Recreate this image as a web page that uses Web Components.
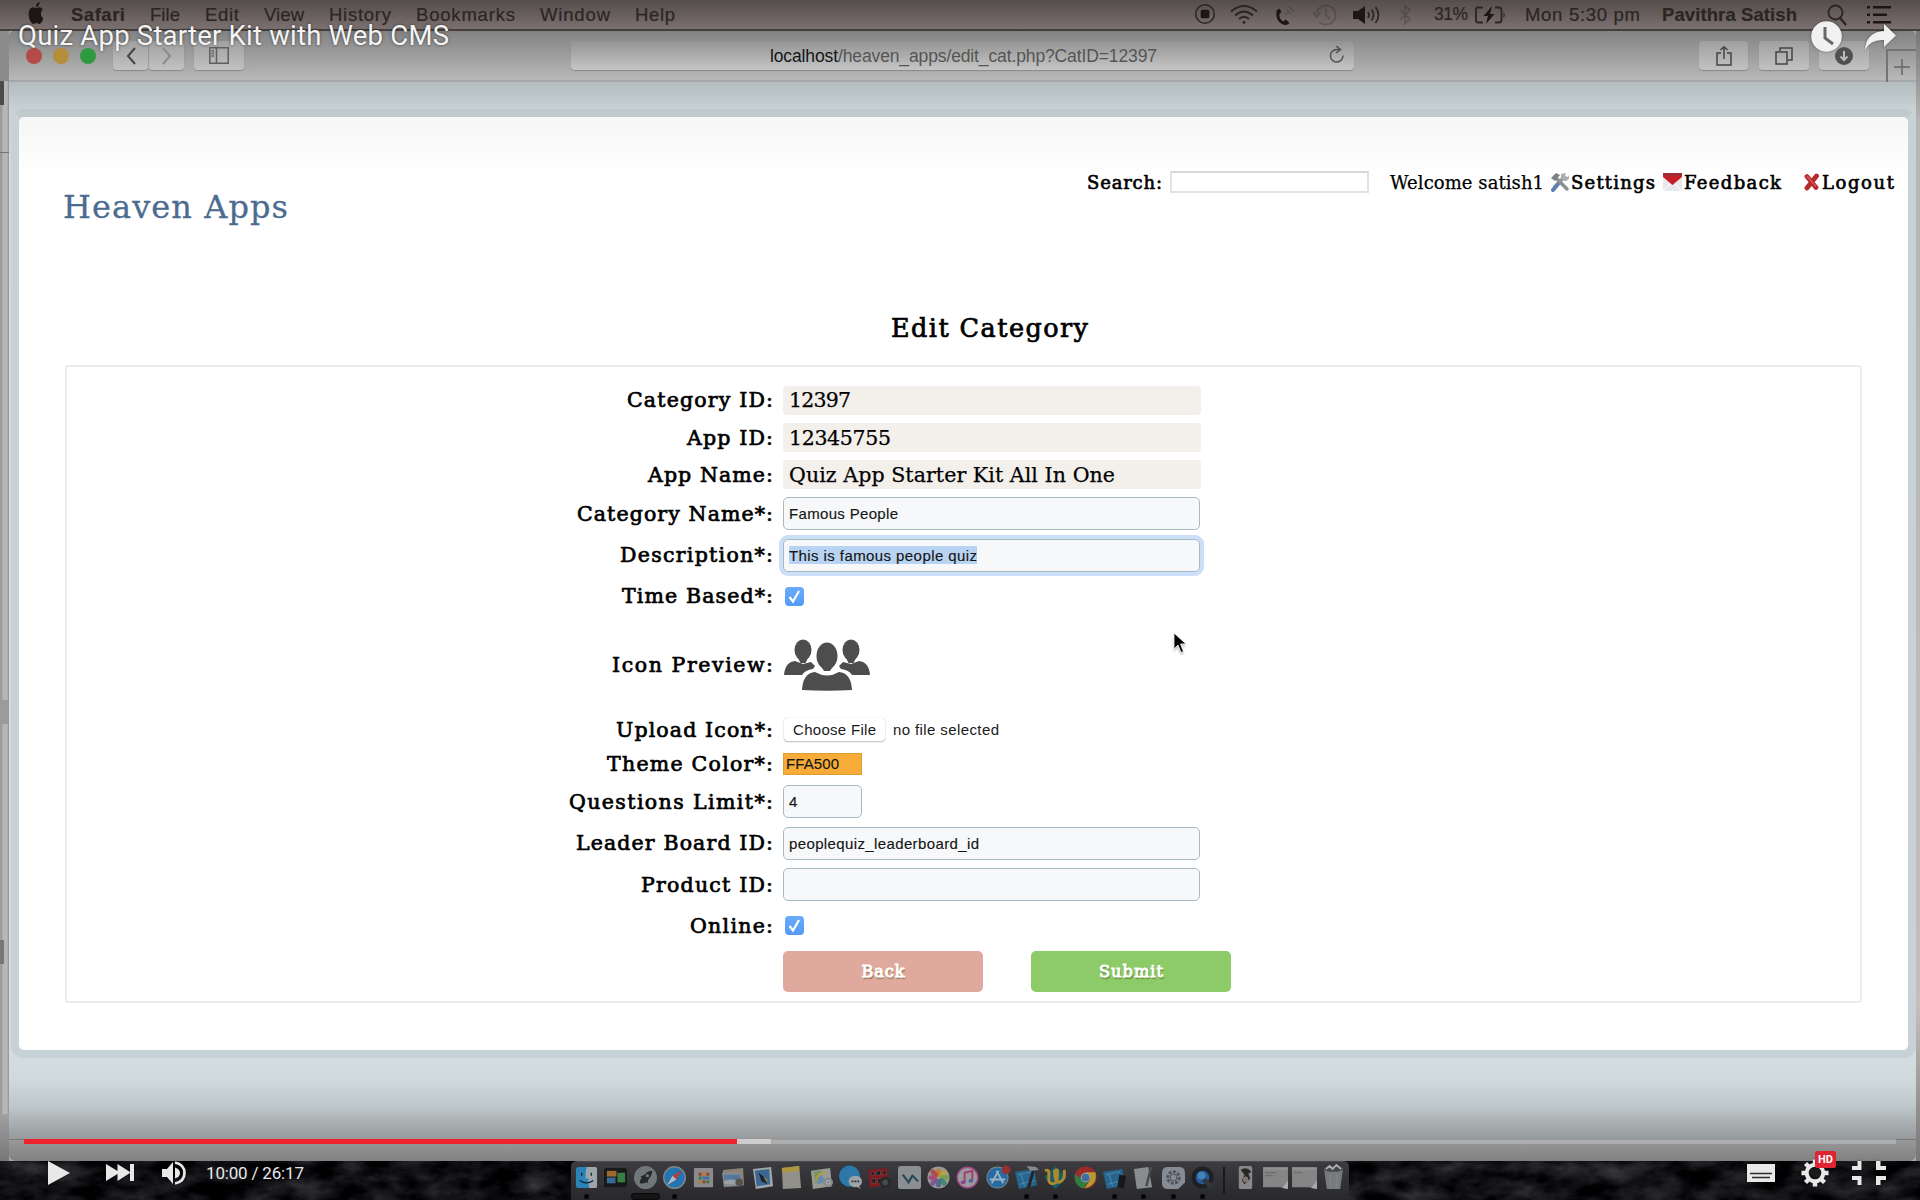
<!DOCTYPE html>
<html lang="en">
<head>
<meta charset="utf-8">
<title>Quiz App Starter Kit with Web CMS</title>
<style>
html,body{margin:0;padding:0;width:1920px;height:1200px;overflow:hidden;background:#0c0c10;font-family:"Liberation Sans",Arial,sans-serif}
</style>
</head>
<body>
<video-screen></video-screen>
<script>
const define = (name, html, after) => customElements.define(name, class extends HTMLElement {
  connectedCallback() {
    if (this.shadowRoot) return;
    this.attachShadow({mode: "open"}).innerHTML = html;
    if (after) after.call(this);
  }
});

/* Text set to an exact advance width by spreading its letters. */
customElements.define("fit-text", class extends HTMLElement {
  connectedCallback() {
    if (this.shadowRoot) return;
    this.attachShadow({mode: "open"}).innerHTML =
      `<style>:host{display:inline-block;white-space:nowrap;flex:none}span{display:inline-block}</style><span><slot></slot></span>`;
    const w = +this.getAttribute("w"), span = this.shadowRoot.querySelector("span");
    this.style.width = w + "px";
    const n = this.textContent.length;
    const natural = span.getBoundingClientRect().width;
    if (n > 1 && natural) span.style.letterSpacing = ((w - natural) / (n - 1)).toFixed(3) + "px";
  }
});

/* ---------- macOS menu bar ---------- */
define("mac-menubar", `
<style>
:host{display:flex;height:29px;box-sizing:border-box;padding:0 29px 0 27px;align-items:center;
 background:linear-gradient(#534e4d,#675e5d 50%,#7b7170);border-bottom:0;font-size:18.5px;color:#2b2524}
b{font-weight:700}
.apple{width:18px;height:22px;margin:-3px 26px 0 0}
fit-text{margin-right:25px;-webkit-text-stroke:.2px #2b2524}
.sp{flex:1}
svg{display:block;flex:none;overflow:visible}
.dim{opacity:.22}
</style>
<svg class="apple" viewBox="0 0 24 24" preserveAspectRatio="none" fill="#1c1615"><path d="M12.152 6.896c-.948 0-2.415-1.078-3.96-1.04-2.04.027-3.91 1.183-4.961 3.014-2.117 3.675-.546 9.103 1.519 12.09 1.013 1.454 2.208 3.09 3.792 3.039 1.52-.065 2.09-.987 3.935-.987 1.831 0 2.35.987 3.96.948 1.637-.026 2.676-1.48 3.676-2.948 1.156-1.688 1.636-3.325 1.662-3.415-.039-.013-3.182-1.221-3.22-4.857-.026-3.04 2.48-4.494 2.597-4.559-1.429-2.09-3.623-2.324-4.39-2.376-2-.156-3.675 1.09-4.61 1.09zM15.53 3.83c.843-1.012 1.4-2.427 1.245-3.83-1.207.052-2.662.805-3.532 1.818-.78.896-1.454 2.338-1.273 3.714 1.338.104 2.715-.688 3.559-1.701"/></svg>
<fit-text w="54"><b>Safari</b></fit-text><fit-text w="30">File</fit-text><fit-text w="34">Edit</fit-text><fit-text w="40">View</fit-text><fit-text w="62">History</fit-text><fit-text w="99">Bookmarks</fit-text><fit-text w="70">Window</fit-text><fit-text w="40">Help</fit-text>
<span class="sp"></span>
<svg width="22" height="22" viewBox="0 0 22 22" style="margin-right:14px;margin-top:-1px"><circle cx="11" cy="11" r="9.3" fill="none" stroke="#2b2524" stroke-width="1.5"/><rect x="6.7" y="6.7" width="8.6" height="8.6" rx="1.5" fill="#1c1615"/></svg>
<svg width="28" height="20" viewBox="0 0 28 20" style="margin-right:16px" fill="none" stroke="#2b2524" stroke-width="2"><path d="M1 6.5Q14-4.5 27 6.5M5 10.5Q14 2.500 23 10.5M9 14Q14 9.500 19 14"/><circle cx="14" cy="17.500" r="1.400" fill="#2b2524" stroke="none"/></svg>
<svg width="24" height="22" viewBox="0 0 24 22" style="margin-right:15px"><path d="M2.500 6.500Q1 16 8 20Q12.500 22.500 15.500 19L12 15.500L9 17.500Q4.500 14 5.500 10L7.500 8L5.500 4.500Z" fill="#1c1615"/><g class="dim" fill="none" stroke="#1c1615" stroke-width="1.500"><path d="M11 11l3-3M13 6l2 2 2 2M15 3l3 2 2 3"/></g></svg>
<svg class="dim" width="24" height="22" viewBox="0 0 24 22" style="margin-right:16px" fill="none" stroke="#1c1615" stroke-width="1.800"><path d="M3.500 10.500A9.500 9.500 0 1 1 6.500 18M0 8l3.700 5L7.500 8M13 5v6l4 4"/></svg>
<svg width="28" height="22" viewBox="0 0 28 22" style="margin-right:18px"><path d="M0 7h5l7-5v18l-7-5H0z" fill="#1c1615"/><path d="M15 8q2 3 0 6M18.500 5.500q4 5.500 0 11M22.500 3q6 8 0 16" fill="none" stroke="#2b2524" stroke-width="1.700"/></svg>
<svg class="dim" width="13" height="22" viewBox="0 0 13 22" style="margin-right:22px" fill="none" stroke="#1c1615" stroke-width="1.700"><path d="M1 6l10 9-5 5V2l5 4L1 16"/></svg>
<fit-text w="34" style="margin-right:7px;font-size:17.500px">31%</fit-text>
<svg width="31" height="18" viewBox="0 0 31 18" style="margin-right:19px" fill="none" stroke="#2b2524" stroke-width="1.800"><path d="M8 1.500H3Q1 1.500 1 3.500v11Q1 16.500 3 16.500h5M20 1.500h4Q26.500 1.500 26.500 4v10Q26.500 16.500 24 16.500h-4"/><path d="M28.500 6q2.500 3 0 6z" fill="#2b2524" stroke="none"/><path d="M17 0L8.500 10H13L11 18 19.500 8H15z" fill="#1c1615" stroke="none"/></svg>
<fit-text w="115" style="margin-right:22px">Mon 5:30 pm</fit-text>
<fit-text w="135" style="margin-right:30px"><b>Pavithra Satish</b></fit-text>
<svg width="20" height="22" viewBox="0 0 20 22" style="margin-right:20px" fill="none" stroke="#2b2524" stroke-width="1.800"><circle cx="8.500" cy="8.500" r="7"/><path d="M13 14l6 7" stroke-width="2.400"/></svg>
<svg width="24" height="18" viewBox="0 0 24 18" fill="#1c1615"><path d="M0 0h3v2.500H0zM6 0h18v2.500H6zM0 7.500h3V10H0zM6 7.500h14V10H6zM0 15h3v2.500H0zM6 15h18v2.500H6z"/></svg>
`);

/* ---------- Safari toolbar ---------- */
define("safari-toolbar", `
<style>
:host{display:flex;height:51px;box-sizing:border-box;padding:1px 0 0 11px;align-items:flex-start;
 background:linear-gradient(#828282,#9b9b9b 45%,#b8b8b8);border-bottom:2px solid #a5a8a8;border-radius:5px 5px 0 0}
i{display:block;width:16px;height:16px;border-radius:50%;margin:16px 11px 0 0;flex:none}
.b{height:29px;margin-top:9px;border-radius:4px;background:linear-gradient(#a0a0a0,#c2c2c2);box-shadow:0 1px 1px rgba(0,0,0,.22);display:flex;align-items:center;justify-content:center;flex:none;box-sizing:border-box}
svg{fill:none;stroke:#444;stroke-width:1.500;display:block}
.url{width:783px;margin-left:327px;background:linear-gradient(#939393,#c6c6c6);font-size:17.500px;color:#555;padding-left:199px;padding-right:8px;justify-content:space-between}
.url fit-text{padding-top:2px}
.url span{color:#15151b}
.tab{width:30px;height:33px;margin:17px 0 0 17px;border:2px solid #747474;border-right:0;border-bottom:0;box-sizing:border-box;display:flex;align-items:center;justify-content:center}
</style>
<div style="display:flex;width:87px"><i style="margin-left:6px;background:#b44b48"></i><i style="background:#b48e3b"></i><i style="background:#2f9940"></i></div>
<div class="b" style="width:35px;margin-left:6px"><svg width="12" height="18" viewBox="0 0 12 18"><path d="M10 1L3 9l7 8" stroke-width="2"/></svg></div>
<div class="b" style="width:35px;margin-left:1px"><svg width="12" height="18" viewBox="0 0 12 18" style="stroke:#8b8b8b"><path d="M2 1l7 8-7 8" stroke-width="2"/></svg></div>
<div class="b" style="width:50px;margin-left:10px"><svg width="20" height="17" viewBox="0 0 20 17" style="stroke:#606060"><path d="M.8.800h18.400v15.400H.8zM7.500 1v15M2.500 4h2.500M2.500 6.500h2.500M2.500 9h2.500"/></svg></div>
<div class="b url"><fit-text w="387"><span>localhost</span>/heaven_apps/edit_cat.php?CatID=12397</fit-text><svg width="18" height="20" viewBox="0 0 18 20" style="stroke:#505050"><path d="M15 9.500a6.300 6.300 0 1 1-6-6H12M8 0l4.500 3.500L8 7"/></svg></div>
<div class="b" style="width:49px;margin-left:345px"><svg width="16" height="20" viewBox="0 0 16 20"><path d="M5 7H1v12h14V7h-4M8 13V1M4.500 4L8 .800 11.500 4"/></svg></div>
<div class="b" style="width:50px;margin-left:11px"><svg width="18" height="18" viewBox="0 0 18 18"><path d="M1 5h11v12H1zM5 4V1h12v12h-4"/></svg></div>
<div class="b" style="width:50px;margin-left:10px"><svg width="18" height="18" viewBox="0 0 18 18"><circle cx="9" cy="9" r="9" fill="#505050" stroke="none"/><path d="M9 4v9M5.500 9.500L9 13l3.500-3.500" stroke="#bbb" stroke-width="2"/></svg></div>
<div class="tab"><svg width="16" height="16" viewBox="0 0 16 16" style="stroke:#666"><path d="M8 0v16M0 8h16"/></svg></div>
`);

/* ---------- CMS page header ---------- */
define("cms-header", `
<style>
:host{display:flex;height:232px;box-sizing:border-box;padding:0 14px 0 44px;justify-content:space-between;align-items:flex-start}
.logo{font-size:32px;line-height:40px;color:#4b6c8f;padding-top:70px;-webkit-text-stroke:.3px #4b6c8f}
nav{display:flex;align-items:center;height:30px;margin-top:50px;font-size:18px;color:#000}
.s{-webkit-text-stroke:.65px #000}
input{box-sizing:border-box;width:199px;height:22px;margin:0 21px 0 8px;border:2px solid #e2e2e2;border-top-color:#d8d8d8;background:#fff;padding:0}
svg{display:block;margin-right:1px}
</style>
<div class="logo"><fit-text w="225">Heaven Apps</fit-text></div>
<nav>
<fit-text class="s" w="75">Search:</fit-text><input>
<fit-text w="154" style="margin-right:6px;-webkit-text-stroke:.25px #000">Welcome satish1</fit-text>
<svg width="20" height="20" viewBox="0 0 20 20"><path d="M4 16L14 5" stroke="#9a9ea0" stroke-width="3.500"/><path d="M3 18L8 12" stroke="#5b80ae" stroke-width="4" stroke-linecap="round"/><path d="M11 2l5-1-1 3 3 1 1-2q1 6-5 6l-3-3z" fill="#a8adb0"/><path d="M5 5l12 12" stroke="#8d9193" stroke-width="3.500" stroke-linecap="round"/><path d="M1 6L6 1l4 2-5 6z" fill="#7c8184"/></svg>
<fit-text class="s" w="84" style="margin-right:8px">Settings</fit-text>
<svg width="20" height="20" viewBox="0 0 20 20"><path d="M0 6h19v13H0z" fill="#e9e9ed"/><path d="M0 19l7-7M19 19l-7-7" stroke="#fff"/><path d="M0 1h19v4L9.500 13 0 5z" fill="#c52029"/><path d="M0 1h19v3H0z" fill="#a32b33"/></svg>
<fit-text class="s" w="97" style="margin-right:22px">Feedback</fit-text>
<svg width="18" height="18" viewBox="0 0 18 18"><path d="M4 3.500l9 11M13.500 3L4 15" stroke="#b92a2f" stroke-width="4.800" stroke-linecap="round"/><path d="M4 3l9 10.500" stroke="#d4585a" stroke-width="1.500"/></svg>
<fit-text class="s" w="72">Logout</fit-text>
</nav>
`);

/* ---------- form row: label on the left, slotted control on the right ---------- */
define("form-row", `
<style>
:host{display:flex;align-items:center;flex:none;height:var(--h,41px)}
.l{width:706px;display:flex;justify-content:flex-end;font-size:20.500px;margin-right:10px;-webkit-text-stroke:.7px #000;color:#000;flex:none}
</style><div class="l"></div><slot></slot>`, function () {
  this.style.setProperty("--h", this.getAttribute("h") + "px");
  const label = this.getAttribute("label");
  if (label) this.shadowRoot.querySelector(".l").innerHTML = `<fit-text w="${this.getAttribute("lw")}">${label}</fit-text>`;
});

define("readonly-value", `
<style>:host{display:flex;align-items:center;box-sizing:border-box;width:418px;height:29px;padding-left:6px;border-radius:4px;background:#f3efeb;font-size:20.500px;color:#000;-webkit-text-stroke:.25px #000}</style><slot></slot>`);

define("text-field", `
<style>:host{display:flex;align-items:center;box-sizing:border-box;width:417px;height:33px;padding-left:5px;border:1.500px solid #a9b9c3;border-radius:5px;background:#f6f8fa;font:15px "Liberation Sans",Arial,sans-serif;color:#151515;-webkit-text-stroke:.15px}
:host([small]){width:79px}
:host([focused]){box-shadow:0 0 0 4px #cbe0f8}
:host([focused]) div{background:#b9d4f2;height:18px;line-height:19px}
:host([color]){width:79px;height:22px;border:1px solid #e19c2f;border-radius:0;background:#f7ac3a;padding-left:2px}
</style><div><slot></slot></div>`);

define("check-box", `
<style>:host{display:block;width:19px;height:19px;margin-left:2px;border-radius:4px;background:linear-gradient(#6aabf9,#559af7)}svg{display:block}</style>
<svg width="19" height="19" viewBox="0 0 19 19"><path d="M4.500 10l3.500 4.500 6-10.500" fill="none" stroke="#fff" stroke-width="2.200"/></svg>`);

define("action-button", `
<style>:host{display:flex;align-items:center;justify-content:center;width:200px;height:41px;border-radius:5px;font-size:16px;color:#fff;background:var(--bg);-webkit-text-stroke:.9px #fff;text-shadow:1px 2px 1px rgba(70,80,20,.55)}</style><slot></slot>`);

define("people-icon", `
<style>:host{display:block;margin-left:1px}svg{display:block}</style>
<svg width="86" height="52" viewBox="0 0 86 52" fill="#4d4d4d"><ellipse cx="19" cy="11" rx="8.500" ry="10.500"/><path d="M13.500 18h11l-3 6h-5zM61.500 18h11l-3 6h-5z"/><ellipse cx="67" cy="11" rx="8.500" ry="10.500"/><path d="M0 36q1-13 11-14l8 3 8-2 4 4-2 3q-8 1-11 6zM86 36q-1-13-11-14l-8 3-8-2-4 4 2 3q8 1 11 6z"/><ellipse cx="43" cy="17" rx="10.500" ry="13.500"/><path d="M35 24h16l-5 8h-6z"/><path d="M18 51q1-17 13-18 12 7 24 0 12 1 13 18-25 1.500-50 0z"/></svg>`);

define("category-form", `
<style>
:host{display:block}
form{margin:0 46px;height:638px;box-sizing:border-box;border:2px solid #ececec;border-radius:3px;padding-top:14px;display:flex;flex-direction:column}
.file{display:flex;align-items:center;font:15px "Liberation Sans",Arial,sans-serif;color:#1a1a1a;gap:8px;margin-left:1px}
.choose{width:101px;height:23px;border-radius:4px;background:#fff;box-shadow:0 0 1px rgba(0,0,0,.25),0 1px 1.500px rgba(0,0,0,.25);display:flex;align-items:center;justify-content:center}
</style>
<form>
<form-row label="Category ID:" lw="146" h="38"><readonly-value><fit-text w="62">12397</fit-text></readonly-value></form-row>
<form-row label="App ID:" lw="86" h="37"><readonly-value><fit-text w="102">12345755</fit-text></readonly-value></form-row>
<form-row label="App Name:" lw="125" h="37"><readonly-value><fit-text w="326">Quiz App Starter Kit All In One</fit-text></readonly-value></form-row>
<form-row label="Category Name*:" lw="196" h="41"><text-field><fit-text w="109">Famous People</fit-text></text-field></form-row>
<form-row label="Description*:" lw="153" h="42"><text-field focused><fit-text w="188">This is famous people quiz</fit-text></text-field></form-row>
<form-row label="Time Based*:" lw="151" h="40"><check-box></check-box></form-row>
<form-row label="Icon Preview:" lw="161" h="97"><people-icon></people-icon></form-row>
<form-row label="Upload Icon*:" lw="157" h="33"><div class="file"><div class="choose"><fit-text w="83">Choose File</fit-text></div><fit-text w="106">no file selected</fit-text></div></form-row>
<form-row label="Theme Color*:" lw="166" h="35"><text-field color><fit-text w="53">FFA500</fit-text></text-field></form-row>
<form-row label="Questions Limit*:" lw="204" h="41"><text-field small>4</text-field></form-row>
<form-row label="Leader Board ID:" lw="197" h="42"><text-field><fit-text w="190">peoplequiz_leaderboard_id</fit-text></text-field></form-row>
<form-row label="Product ID:" lw="132" h="41"><text-field></text-field></form-row>
<form-row label="Online:" lw="83" h="41"><check-box></check-box></form-row>
<form-row h="51"><action-button style="--bg:#dfa99e;margin-right:48px"><fit-text w="43">Back</fit-text></action-button><action-button style="--bg:#8dca68"><fit-text w="64">Submit</fit-text></action-button></form-row>
</form>`);

define("safari-window", `
<style>
:host{display:flex;height:1130px;background:#a9a9a9}
.edge{width:9px;flex:none;display:flex;flex-direction:column;background:linear-gradient(90deg,#9c9c9c 0 2px,#b7b7b7 3px 7px,#8f9292 9px);}
.edge span{display:block;background:#737373}
.win{width:1907px;display:flex;flex-direction:column}
.page{width:1907px;height:1057px;box-sizing:border-box;padding:27px 0 0 2px;background:linear-gradient(#b3bcbe,#c8d1d4 27px,#d0dadd 75px,#d3dce0 980px,#cfd8da 1000px,#bdc6c8 1025px,#95999c 1057px)}
.card{box-sizing:border-box;width:1905px;height:949px;border:8px solid #c7d2d7;border-top-color:#c0cacd;border-radius:12px;}
.in{height:933px;box-sizing:border-box;border-radius:5px;background:linear-gradient(#f6f6f6,#fff 60px);font-family:"DejaVu Serif",serif}
h1{margin:-36px 0 0;height:52px;padding:0 0 0 872px;font-size:25.500px;font-weight:400;line-height:30px;-webkit-text-stroke:.7px #000}
.status{flex:1;background:linear-gradient(#999,#808080);border-top:1px solid #77787b;border-radius:0 0 7px 7px}
.r{width:4px;flex:none;background:linear-gradient(#777,#b5b5b5 90px,#c4bebb 980px,#777)}
</style>
<div class="edge"><span style="height:50px;background:#8c8c8c"></span><span style="width:4px;height:24px;background:#4b4b4b"></span><span style="margin-top:47px;height:1px"></span><span style="margin-top:547px;height:24px;background:#9b9b9b"></span><span style="margin-top:216px;width:4px;height:24px;background:#777"></span><span style="flex:1;margin-top:150px;background:linear-gradient(#a0a0a0,#777)"></span></div>
<div class="win">
<safari-toolbar></safari-toolbar>
<div class="page"><div class="card"><div class="in"><cms-header></cms-header><h1><fit-text w="197">Edit Category</fit-text></h1><category-form></category-form></div></div></div>
<div class="status"></div>
</div><div class="r"></div>`);

/* ---------- Dock ---------- */
const dockIcons = [
 `<rect x="1" width="22" height="22" rx="3" fill="#2a84b8"/><path d="M12 0h9q2 0 2 2v18q0 2-2 2h-6q-2-5-1-10h-3Q11 5 12 0z" fill="#9da5ab"/><path d="M7 6v3M17 6v3M5 14q7 5 14 0" stroke="#0e1f30" stroke-width="1.300" fill="none"/>`,
 `<rect y="1" width="24" height="20" rx="2" fill="#18191b"/><path d="M3 4h10v6H3z" fill="#a2692f"/><path d="M3 11h9v6H3z" fill="#396b9a"/><path d="M14 6h8v10h-8z" fill="#36803f"/>`,
 `<circle cx="12" cy="11" r="12" fill="#717679"/><path d="M6 17q0-4 2-5l-1-2 4-2q3-4 8-4 0 5-4 9l-1 4-2-1q-1 2-6 1z" fill="#25292c"/><circle cx="14" cy="9" r="1.700" fill="#6a7478"/>`,
 `<circle cx="12" cy="11" r="12" fill="#80868b"/><circle cx="12" cy="11" r="10.500" fill="#2274b3"/><path d="M20 3L10 9l4 4z" fill="#b83d36"/><path d="M4 19l6-10 4 4z" fill="#b4b9bb"/>`,
 `<rect x="2" y="1" width="20" height="20" rx="1" fill="#8b8b8b"/><path d="M7 6h3v3H7zM15 6h3v3h-3zM11 14h3v3h-3z" fill="#a43b32"/><path d="M11 6h3v3h-3zM7 14h3v3H7z" fill="#a9822b"/><path d="M7 10h3v3H7zM15 14h3v3h-3z" fill="#2e7c4c"/><path d="M11 10h7v3h-7z" fill="#3f70a3"/>`,
 `<path d="M1 3l21-2 1 18-21 2z" fill="#8d8373"/><path d="M0 6h20v14H2z" fill="#848c94"/><path d="M2 8h17v6H2z" fill="#55779c"/><path d="M2 15q6-4 16 0v3H3z" fill="#9aa1a6"/><circle cx="18" cy="16" r="4" fill="#55504a"/>`,
 `<path d="M2 2l19-2 2 20-18 3z" fill="#a2a5a8"/><path d="M4 4l15-2 1 16-14 2z" fill="#3b6893"/><path d="M8 6l5 4 4 8-6-3z" fill="#1e2327"/><path d="M13 10l4 3v3z" fill="#a28637"/>`,
 `<path d="M2 1l18-2 2 23-19 1z" fill="#919189"/><path d="M2 1l18-2v5L2 6z" fill="#ad983f"/>`,
 `<path d="M1 4l20-3 2 19-20 3z" fill="#999a93"/><path d="M4 5l8-1-6 14z" fill="#70975f"/><path d="M10 7l9 9-12 2z" fill="#6a8ba8"/><path d="M6 14q2-8 10-8" stroke="#b79b40" stroke-width="2" fill="none"/><circle cx="19" cy="16" r="5" fill="#85898b"/><circle cx="19" cy="16" r="2" fill="none" stroke="#b6b8b9"/>`,
 `<circle cx="11" cy="9.500" r="11" fill="#2c78a9"/><ellipse cx="17" cy="15" rx="7" ry="6" fill="#9da4a7"/><path d="M20 19l3 4-6-3z" fill="#9da4a7"/><path d="M13 14h2v2h-2zM16 14h2v2h-2zM19 14h2v2h-2z" fill="#34383a"/>`,
 `<path d="M0 3l20-2 2 18-20 2z" fill="#7d1b20"/><path d="M3 5h4v4H3zM9 4h4v5H9zM15 4h4v4h-4zM4 12h4v5H4zM10 12h4v5h-4z" fill="#202124" stroke="#77393c"/><circle cx="18" cy="16" r="6" fill="#27292b"/><circle cx="18" cy="16" r="3" fill="#444b50"/>`,
 `<rect x="0" y="-1" width="24" height="24" rx="3" fill="#8b8f91"/><path d="M5 8l6 8 4-7 6 6" stroke="#264659" stroke-width="2.200" fill="none"/>`,
 `<circle cx="12" cy="11" r="11.500" fill="#999"/><g stroke-width="5" stroke-linecap="round" opacity=".85"><path d="M12 8V4" stroke="#c77a21"/><path d="M15 9l3-3" stroke="#bba52d"/><path d="M16 11h4" stroke="#6fa13d"/><path d="M15 14l3 3" stroke="#33826b"/><path d="M12 15v4" stroke="#40648f"/><path d="M9 14l-3 3" stroke="#77508b"/><path d="M8 11H4" stroke="#a04176"/><path d="M9 8L6 5" stroke="#b7413a"/></g>`,
 `<circle cx="12" cy="11" r="11.500" fill="#a14a85"/><circle cx="12" cy="11" r="10" fill="#9b9a9e"/><path d="M9 16V6l8-2v10" fill="none" stroke="#a33d70" stroke-width="2"/><ellipse cx="7.500" cy="16" rx="2.500" ry="2" fill="#854699"/><ellipse cx="15.500" cy="14.500" rx="2.500" ry="2" fill="#4569a2"/>`,
 `<circle cx="12" cy="11" r="11.500" fill="#78848a"/><circle cx="12" cy="11" r="10.500" fill="#276ba5"/><path d="M6 17L13 4M11 4l7 13M4 13h16" stroke="#9bb1c0" stroke-width="2"/><circle cx="21" cy="3" r="4.500" fill="#98302f"/>`,
 `<path d="M0 5l20-3 3 17-19 4z" fill="#27648e"/><path d="M3 8l15-3M5 18l15-4M6 7l4 13" stroke="#4e88ad"/><path d="M19 4l-5 18" stroke="#222426" stroke-width="3"/><path d="M12-1l10 1 3 3-9 1z" fill="#85898c"/>`,
 `<path d="M12-1l12 12-12 12L0 11z" fill="#175c6a"/><path d="M1 4q5-3 4 6t6 7q4-1 3-13 0-2-3 0 0 12 4 12 8-2 6-13" stroke="#ad8b28" stroke-width="3" fill="none"/>`,
 `<circle cx="12" cy="11" r="11.500" fill="#9b2b27"/><path d="M1 7q-2 12 9 15.500l6-9L7 12z" fill="#2b7f43"/><path d="M12 5.500h10.500Q25 19 11 22.500L17 13z" fill="#b8992f"/><circle cx="12" cy="11" r="5" fill="#9fa5a7"/><circle cx="12" cy="11" r="4" fill="#3c6e9e"/>`,
 `<path d="M0 5l20-3 3 17-19 4z" fill="#27648e"/><path d="M3 8l15-3M5 18l15-4M6 7l4 13" stroke="#4e88ad"/><path d="M17 8l7 1-2 13-7-1z" fill="#151719"/>`,
 `<path d="M2 2l15-2 4 21-16 2z" fill="#8a8d8f"/><path d="M20 0l-5 20" stroke="#484a4c" stroke-width="2.500"/>`,
 `<path d="M6 0h12q6 0 6 6v10l-7 7H6q-6 0-6-6V6q0-6 6-6z" fill="#868c93"/><circle cx="12" cy="11" r="6" fill="none" stroke="#4c535d" stroke-width="3" stroke-dasharray="3 1.500"/><circle cx="12" cy="11" r="3.500" fill="none" stroke="#4c535d"/>`,
 `<circle cx="12" cy="11" r="11.500" fill="#1e2124"/><circle cx="12" cy="11" r="7" fill="#255b9c"/><path d="M13 13l9 8" stroke="#33373a" stroke-width="5"/><circle cx="11" cy="9" r="4" fill="#4381b9"/>`,
 `sep`,
 `<rect x="5" y="-1" width="14" height="24" rx="2" fill="#888"/><path d="M7 3q6-4 11 2l-3 2 2 5-6 6-3-4 3-6z" fill="#292725"/><circle cx="12" cy="13" r="3" fill="#7f776b"/>`,
 `<path d="M-1 0h26v23l-8-2H-1z" fill="#858585"/><path d="M-1 2h26" stroke="#919191" stroke-width="2"/><path d="M1 6h12M1 9h8" stroke="#666"/><path d="M19 22l6-8v9z" fill="#aaa"/>`,
 `<path d="M-1 0h26v23l-8-2H-1z" fill="#858585"/><path d="M-1 2h26" stroke="#919191" stroke-width="2"/><path d="M1 6h9" stroke="#666"/><path d="M19 22l6-8v9z" fill="#aaa"/>`,
 `<path d="M2 1h20l-3 22H5z" fill="#777a7b"/><ellipse cx="12" cy="2" rx="10" ry="3" fill="#45484a"/><path d="M4 2l4-3 3 3 4-4 5 4" stroke="#aaadaf" fill="none" stroke-width="2"/><path d="M8 7l1 14M16 7l-1 14" stroke="#868989"/>`];
const running = [0, 3, 15, 16, 18, 19, 20, 21];
define("mac-dock", `
<style>
:host{display:flex;height:39px;justify-content:center;background:#0b0b0e;overflow:hidden;position:relative}
.rock{position:absolute;inset:0}
.shelf{position:relative;width:778px;box-sizing:border-box;padding:0 4px 0 1px;background:linear-gradient(#3c3c40,#29292c);border-radius:6px 6px 0 0;display:flex;border-top:1px solid #4c4c50}
.slot{width:29.330px;display:flex;flex-direction:column;align-items:center;padding-top:5px;flex:none}
.slot svg{display:block;overflow:visible}
.dot{width:5px;height:5px;border-radius:50%;background:#050505;margin-top:4px}
.wide{width:27px;border-radius:3px;background:#151517;box-shadow:0 0 0 1px #0a0a0b}
.sep{width:14px;display:flex;justify-content:center;padding-top:5px;flex:none}.sep:after{content:"";width:1.500px;height:27px;background:#19191b}
</style>
<svg class="rock" width="1920" height="39"><filter id="rock" x="0" y="0" width="100%" height="100%" color-interpolation-filters="sRGB"><feTurbulence type="fractalNoise" baseFrequency=".025 .05" numOctaves="5" seed="8"/><feColorMatrix values=".38 0 0 0 -.125  .38 0 0 0 -.125  .38 0 0 0 -.112  0 0 0 0 1"/></filter><rect width="1920" height="39" filter="url(#rock)"/></svg>
<div class="shelf"></div>`, function () {
  this.shadowRoot.querySelector(".shelf").innerHTML = dockIcons.map((art, i) =>
    art === "sep" ? `<div class="sep"></div>` :
    `<div class="slot"><svg width="23" height="23" viewBox="0 0 24 24">${art}</svg>${
      i === 2 ? `<div class="dot wide"></div>` : running.includes(i) ? `<div class="dot"></div>` : ""}</div>`).join("");
});

/* ---------- Player chrome laid over the recording ---------- */
define("player-overlay", `
<style>
:host{position:absolute;inset:0;display:flex;flex-direction:column;justify-content:space-between;font-family:Roboto,sans-serif;color:#fff}
.top{display:flex;justify-content:space-between;padding:18px 24px 0 18px;align-items:flex-start}
.title{font-size:27.500px;line-height:36px;color:#f4f4f4;text-shadow:0 0 3px rgba(0,0,0,.6)}
.actions{display:flex;gap:23px}
svg{display:block;filter:drop-shadow(0 0 1px rgba(0,0,0,.5))}
.bottom{height:61px}
.track{height:5px;margin:0 24px;background:rgba(200,200,200,.45);display:flex}
.played{width:713px;background:#ee222d}.load{width:34px;background:#cdcdcd}
.ctl{display:flex;align-items:center;height:57px;padding:0 34px 0 48px}
.time{font-size:17px;color:#e8e8e8;margin-left:20px}
.sp{flex:1}
.gear{position:relative;margin:0 23px 0 26px}
.hd{position:absolute;left:14px;top:-8px;width:21px;height:17px;border-radius:2px;background:#de2430;font:700 11px/17px Roboto,sans-serif;text-align:center;color:#fff}
</style>
<div class="top"><div class="title"><fit-text w="431">Quiz App Starter Kit with Web CMS</fit-text></div>
<div class="actions">
<svg width="31" height="31" viewBox="0 0 31 31" style="margin-top:3px"><circle cx="15.500" cy="15.500" r="15.300" fill="#f1f1f1"/><path d="M14 6v11l8 6" fill="none" stroke="#686868" stroke-width="3"/></svg>
<svg width="31" height="26" viewBox="0 0 31 26" style="margin-top:6px"><path d="M19 0l12 11.500L19 23v-7Q6 15 0 26 1 8 19 7z" fill="#f1f1f1"/></svg>
</div></div>
<div class="bottom"><div class="track"><div class="played"></div><div class="load"></div></div>
<div class="ctl">
<svg width="22" height="24" viewBox="0 0 22 24"><path d="M0 0l22 12L0 24z" fill="#e8e8e8"/></svg>
<svg style="margin-left:36px" width="28" height="17" viewBox="0 0 28 17"><path d="M0 0l11.500 7V0L24 8V0h4v17h-4V9L11.500 17v-7L0 17z" fill="#e8e8e8"/></svg>
<svg style="margin-left:28px" width="24" height="24" viewBox="0 0 24 24"><path d="M0 8h5l6-7v22l-6-7H0z" fill="#e8e8e8"/><path d="M13 6.500Q18 8 18 12t-5 5.500z" fill="#e8e8e8"/><path d="M13 1.500q9.500 2 9.500 10.500T13 22.500" fill="none" stroke="#e8e8e8" stroke-width="2.700"/></svg>
<div class="time"><fit-text w="98">10:00 / 26:17</fit-text></div>
<span class="sp"></span>
<svg width="28" height="18" viewBox="0 0 28 18"><path fill="#e8e8e8" d="M0 0h28v18H0z"/><path d="M3 9.500h22M5 13.500h18" stroke="#2b2b30" stroke-width="1.500"/></svg>
<div class="gear"><svg width="28" height="28" viewBox="-14 -14 28 28"><g stroke="#e8e8e8"><circle r="8.300" fill="none" stroke-width="4"/><path d="M0-13.500v5M0 8.500v5M-13.500 0h5M8.500 0h5M-9.500-9.500l3.500 3.500M6 6l3.500 3.500M-9.500 9.500L-6 6M6-6l3.500-3.500" stroke-width="4.500"/></g></svg><div class="hd">HD</div></div>
<svg width="34" height="24" viewBox="0 0 34 24" fill="#e8e8e8"><path d="M5.500 0h4v9H0V5h5.500zM24 0h4.500v5H34v4H24zM0 15h9.500v9h-4v-5H0zM24 15h10v4h-5.500v5H24z"/></svg>
</div></div>`);

define("mouse-pointer", `
<style>:host{position:absolute;left:1173px;top:632px}svg{display:block;filter:drop-shadow(0 2px 1px rgba(0,0,0,.25))}</style>
<svg width="14" height="22" viewBox="0 0 14 22"><path d="M1 1v16l4-4 3 7.500 2.500-1L7.500 12H13z" fill="#000" stroke="#fff" stroke-width=".8"/></svg>`);

define("video-screen", `
<style>
:host{display:flex;flex-direction:column;position:relative;width:1920px;height:1200px;overflow:hidden}
.line{height:2px;background:#463e3b}
</style>
<mac-menubar></mac-menubar><div class="line"></div><safari-window></safari-window><mac-dock></mac-dock>
<mouse-pointer></mouse-pointer><player-overlay></player-overlay>`);
</script>
</body>
</html>
